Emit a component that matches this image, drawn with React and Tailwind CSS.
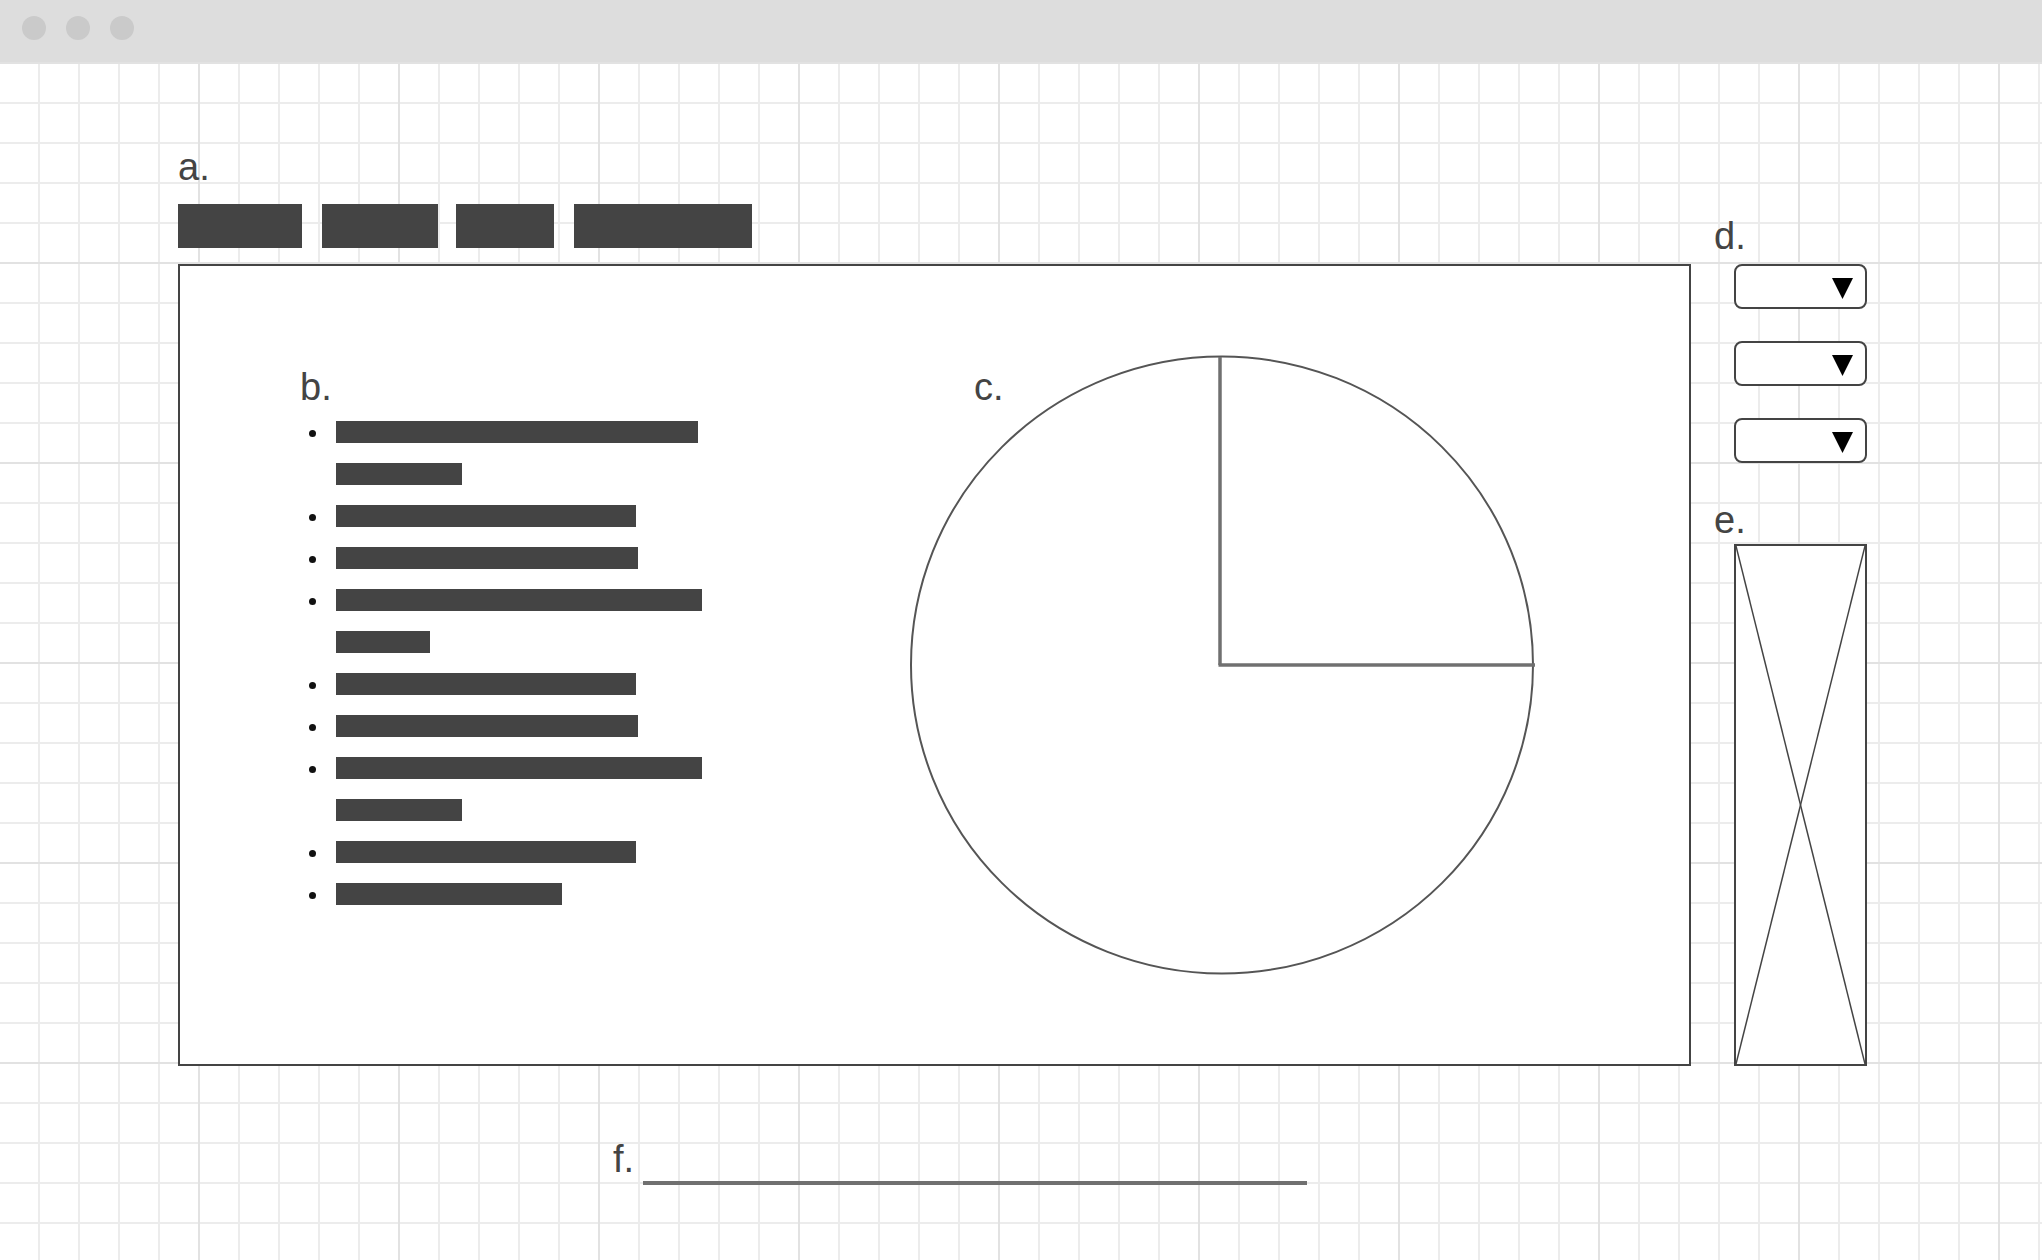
const tabs = [
  { w: 124, ml: 0 },
  { w: 116, ml: 20 },
  { w: 98, ml: 18 },
  { w: 178, ml: 20 },
];

const rows = [
  { dot: true, w: 362 },
  { dot: false, w: 126 },
  { dot: true, w: 300 },
  { dot: true, w: 302 },
  { dot: true, w: 366 },
  { dot: false, w: 94 },
  { dot: true, w: 300 },
  { dot: true, w: 302 },
  { dot: true, w: 366 },
  { dot: false, w: 126 },
  { dot: true, w: 300 },
  { dot: true, w: 226 },
];

function Label({ children, className = "" }) {
  return (
    <div
      className={
        "font-['Liberation_Sans',Arial,sans-serif] text-[38px] leading-[38px] text-[#444]" +
        " " +
        className
      }
    >
      {children}
    </div>
  );
}

function Dropdown() {
  return (
    <div className="w-[133px] h-[45px] border-2 border-[#444] rounded-[8px] bg-white flex justify-end items-start pt-[12px] pr-[12px]">
      <svg width="21" height="21" viewBox="0 0 21 21">
        <polygon points="0,0 21,0 10.5,21" fill="#000" />
      </svg>
    </div>
  );
}

function PieChart() {
  return (
    <div className="relative mt-[88px] w-[632px] h-[622px]">
      <svg width="632" height="622" viewBox="0 0 632 622">
        <ellipse cx="314" cy="311" rx="311" ry="308.5" fill="none" stroke="#555" strokeWidth="2" />
        <line x1="312" y1="3" x2="312" y2="311" stroke="#707070" strokeWidth="3.5" />
        <line x1="310.5" y1="311" x2="627" y2="311" stroke="#707070" strokeWidth="3.5" />
      </svg>
      {/* label sits in the chart's top-left corner */}
      <Label className="absolute left-[66px] top-[14px]">c.</Label>
    </div>
  );
}

function App() {
  return (
    <div className="w-[2042px] h-[1260px] bg-white flex flex-col overflow-hidden">
      {/* window bar */}
      <div className="h-[62px] bg-[#dddddd] flex gap-[20px] pl-[22px] pt-[16px]">
        <div className="size-6 rounded-full bg-[#cacaca]" />
        <div className="size-6 rounded-full bg-[#cacaca]" />
        <div className="size-6 rounded-full bg-[#cacaca]" />
      </div>

      {/* grid canvas */}
      <div className="flex-1 bg-white bg-[image:linear-gradient(to_right,#e2e2e2_2px,transparent_2px),linear-gradient(to_bottom,#e2e2e2_2px,transparent_2px),linear-gradient(to_right,#ececec_2px,transparent_2px),linear-gradient(to_bottom,#ececec_2px,transparent_2px)] bg-[size:200px_200px,200px_200px,40px_40px,40px_40px] bg-[position:-2px_0,0_0,-2px_0,0_0] pl-[178px] pt-[86px]">
        <div className="flex">
          {/* main column */}
          <div className="flex flex-col">
            <Label>a.</Label>
            <div className="flex mt-[18px]">
              {tabs.map((t, i) => (
                <div
                  key={i}
                  className="h-[44px] bg-[#444]"
                  style={{ width: t.w, marginLeft: t.ml }}
                />
              ))}
            </div>
            <div className="mt-[16px] w-[1513px] h-[802px] border-2 border-[#444] bg-white flex">
              <div className="w-[728px] pl-[120px] pt-[102px] flex flex-col">
                <Label>b.</Label>
                <div className="mt-[15px] flex flex-col gap-[20px]">
                  {rows.map((r, i) => (
                    <div key={i} className="flex items-center h-[22px]">
                      <div className="w-[36px] pl-[9px] flex">
                        {r.dot && <div className="size-[7px] rounded-full bg-[#111] mt-[2px]" />}
                      </div>
                      <div className="h-[22px] bg-[#444]" style={{ width: r.w }} />
                    </div>
                  ))}
                </div>
              </div>
              <PieChart />
            </div>
          </div>

          {/* right column */}
          <div className="ml-[23px] pt-[69px] flex flex-col">
            <Label>d.</Label>
            <div className="ml-[20px] mt-[9px] flex flex-col gap-[32px]">
              <Dropdown />
              <Dropdown />
              <Dropdown />
            </div>
            <Label className="mt-[38px]">e.</Label>
            <div className="ml-[20px] mt-[5px] w-[133px] h-[522px] border-2 border-[#444] bg-white">
              <svg className="w-full h-full block" viewBox="0 0 100 100" preserveAspectRatio="none">
                <line x1="0" y1="0" x2="100" y2="100" stroke="#444" strokeWidth="1.5" vectorEffect="non-scaling-stroke" />
                <line x1="100" y1="0" x2="0" y2="100" stroke="#444" strokeWidth="1.5" vectorEffect="non-scaling-stroke" />
              </svg>
            </div>
          </div>
        </div>

        {/* footer field */}
        <div className="flex items-start ml-[435px] mt-[74px]">
          <Label>f.</Label>
          <div className="ml-[9px] mt-[41px] w-[664px] h-[4px] bg-[#707070]" />
        </div>
      </div>
    </div>
  );
}

export default App;
